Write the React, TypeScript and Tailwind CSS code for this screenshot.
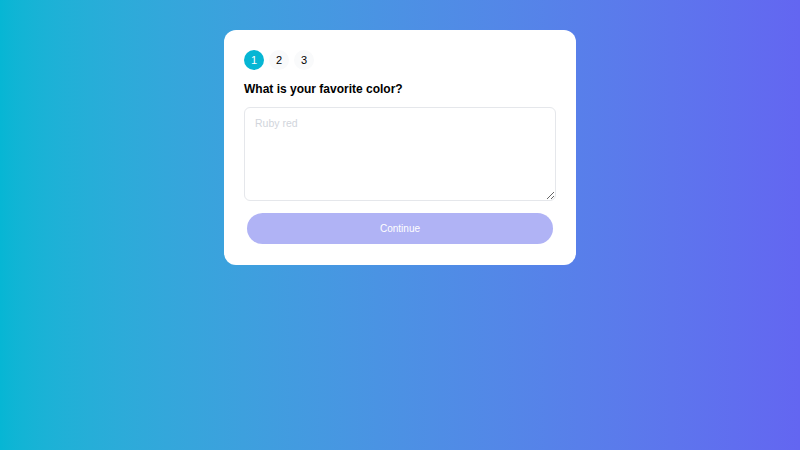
export default function App() {
  return (
    <div className="min-h-screen w-full bg-gradient-to-r from-[#06b6d4] to-[#6366f1] flex justify-center pt-[30px] font-['Liberation_Sans',Arial,sans-serif]">
      <div className="w-[352px] h-[235px] bg-white rounded-xl p-5 flex flex-col">
        {/* Steps */}
        <div className="flex gap-[5px]">
          <div className="w-5 h-5 rounded-full bg-[#06b6d4] text-white text-[11px] flex items-center justify-center">1</div>
          <div className="w-5 h-5 rounded-full bg-gray-50 text-black text-[11px] flex items-center justify-center">2</div>
          <div className="w-5 h-5 rounded-full bg-gray-50 text-black text-[11px] flex items-center justify-center">3</div>
        </div>

        <h2 className="mt-[11px] text-[12px] leading-[16px] font-bold text-black">What is your favorite color?</h2>

        <textarea
          placeholder="Ruby red"
          className="mt-[10px] w-full h-[94px] rounded-md border border-gray-200 px-[10px] py-[8px] text-[10.5px] placeholder:text-gray-300 outline-none"
        />

        <button className="mt-[12px] mx-[3px] h-[31px] rounded-full bg-[#b0b3f5] text-white text-[10px]">
          Continue
        </button>
      </div>
    </div>
  );
}
